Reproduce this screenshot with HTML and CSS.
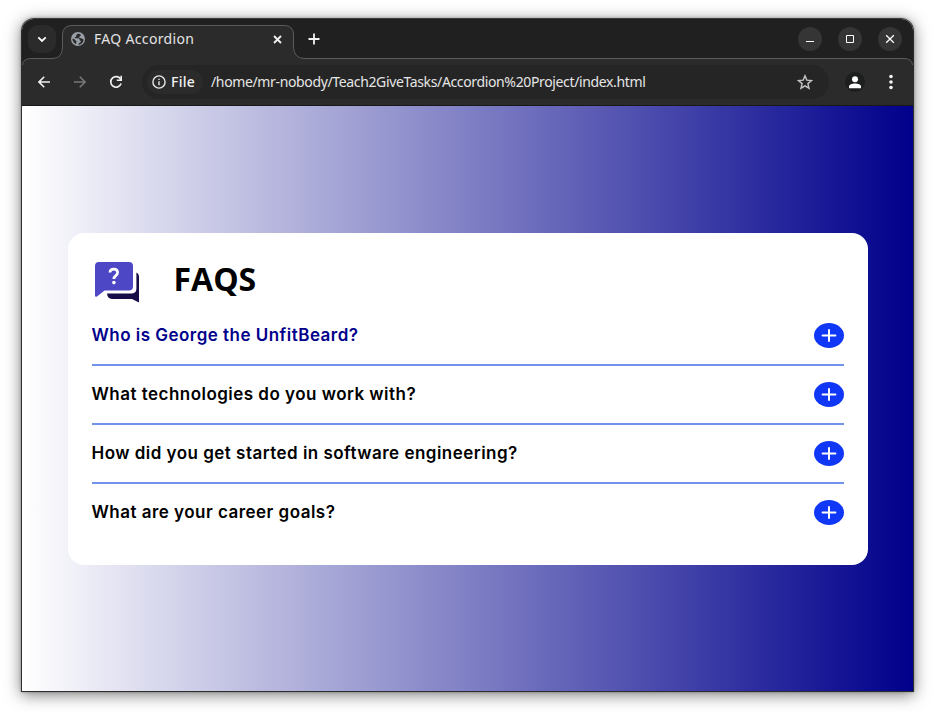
FILE: index.html
```html
<!DOCTYPE html>
<html lang="en">
<head>
<meta charset="utf-8">
<title>FAQ Accordion</title>
<link rel="stylesheet" href="styles.css">
</head>
<body>
<div class="window">
  <header class="chrome">
    <svg class="outline" width="891" height="87" viewBox="0 0 891 87" fill="none">
      <path fill="#2b2b2b" d="M0 87V46Q1 39.500 9 39.500H31Q40.500 39 40.500 28V15Q41 6.500 50 6.500H262Q271 6.500 271.500 15V28Q272 39 282 39.500H882Q890 39.500 891 46V87Z"/>
      <path stroke="#5b5b5b" d="M.5 46Q1 39.500 9 39.500H31Q40.500 39 40.500 28V15Q41 6.500 50 6.500H262Q271 6.500 271.500 15V28Q272 39 282 39.500H882Q890 39.500 890.500 46"/>
    </svg>
    <div class="tabs">
      <button class="search"><svg width="10" height="7" viewBox="0 0 10 7"><path d="M1.300 1.300 5 5 8.700 1.300" fill="none" stroke="#fff" stroke-width="1.800"/></svg></button>
      <div class="tab">
        <svg width="14" height="14" viewBox="0 0 14 14"><circle cx="7" cy="7" r="7" fill="#9aa0a8"/><path fill="#2b2b2b" d="M7.200 1.400C7 2.200 5.200 2.200 5.200 3.300c0 1 .2 1.700-.7 1.800-.9 0-1 .7-.4 1.200h3.200c1 0 1.300.8 1.300 1.500 0 .8 1.200.7 1.200 1.500 0 .6-.3 1.300-1.100 1.500-1 .2-.7 1.400-1.600 1.800.8.200 2.500-.1 3.600-1.200 1-.9 1.900-2.600 1.900-4-.7-.6-1.300-.8-2.100-.8-.6-.9-1.600-.8-2.300-.9-.3-.7.200-1.300.9-1.400.5-.1.400-1 .9-1.600-.9-.8-1.900-1.200-2.800-1.300ZM1.400 7c.1 1.900 1.300 4 3.200 4.900.5.200.8-.2.600-.7-.2-.8.500-1.200.4-1.800-.2-.8-1.500-.8-1.800-1.600C3.500 7.100 2.200 6.600 1.400 7Z"/></svg>
        <span class="tab-title">FAQ Accordion</span>
        <svg class="x" width="9" height="9" viewBox="0 0 9 9"><path d="m1 1 7 7M8 1 1 8" stroke="#f2f2f2" stroke-width="1.800"/></svg>
      </div>
      <svg class="new-tab" width="12" height="12" viewBox="0 0 12 12"><path d="M6 .5v11M.5 6h11" stroke="#f2f2f2" stroke-width="1.800"/></svg>
      <div class="controls">
        <button><svg width="24" height="24" viewBox="0 0 24 24"><path d="M8 14.500h8" stroke="#fff"/></svg></button>
        <button><svg width="24" height="24" viewBox="0 0 24 24"><path d="M8.500 8.500h7v7h-7Z" fill="none" stroke="#fff"/></svg></button>
        <button><svg width="24" height="24" viewBox="0 0 24 24"><path d="m8.200 8.200 7.600 7.600m0-7.600-7.600 7.600" stroke="#fff" stroke-width="1.300"/></svg></button>
      </div>
    </div>
    <div class="toolbar">
      <nav class="nav">
        <svg width="12" height="12" viewBox="0 0 12 12"><path d="M12 6H1.300M6.200.8 1 6l5.200 5.200" fill="none" stroke="#f0f0f0" stroke-width="1.600"/></svg>
        <svg width="12" height="12" viewBox="0 0 12 12"><path d="M0 6h10.700M5.800.8 11 6l-5.200 5.200" fill="none" stroke="#777" stroke-width="1.600"/></svg>
        <svg class="reload" width="14" height="14" viewBox="0 0 14 14"><path d="M11.800 4.500A5.300 5.300 0 1 0 12.100 8.600" fill="none" stroke="#f0f0f0" stroke-width="1.700"/><path d="M13 .8V6H7.800V4.400h3.600V.8Z" fill="#f0f0f0"/></svg>
      </nav>
      <div class="address">
        <div class="chip">
          <svg width="14" height="14" viewBox="0 0 14 14"><circle cx="7" cy="7" r="6.100" fill="none" stroke="#e8e8e8" stroke-width="1.400"/><path d="M7 6.300v4M7 3.700v1.400" stroke="#e8e8e8" stroke-width="1.400"/></svg>
          <span class="file">File</span>
        </div>
        <span class="url">/home/mr-nobody/Teach2GiveTasks/Accordion%20Project/index.html</span>
        <svg class="star" width="16" height="16" viewBox="0 0 16 16"><path d="m8 1.800 1.800 4.300 4.700.4-3.600 3.100 1.100 4.600L8 11.800l-4 2.400 1.100-4.600-3.600-3.100 4.700-.4Z" fill="none" stroke="#c4c4c4" stroke-width="1.400"/></svg>
      </div>
      <div class="avatar"><svg width="12" height="13" viewBox="0 0 12 13"><circle cx="6" cy="3.300" r="3" fill="#fff"/><path d="M0 12.200v-1.600C0 8.400 3 7.500 6 7.500s6 .9 6 3.100v1.600Z" fill="#fff"/></svg></div>
      <svg class="more" width="4" height="16" viewBox="0 0 4 16" fill="#f2f2f2"><circle cx="2" cy="2.500" r="1.800"/><circle cx="2" cy="8" r="1.800"/><circle cx="2" cy="13.500" r="1.800"/></svg>
    </div>
  </header>
  <main class="page">
    <section class="card">
      <div class="heading">
        <svg width="46" height="42" viewBox="0 0 46 42"><path fill="#150d48" d="M42.400 11.500q2.600 1.200 2.600 4V41.400L38 38H18q-4.500-.2-5-5.500h25q4.400-.3 4.400-5Z"/><path fill="#4d47c6" d="M5 1H35q4 0 4 4V25.500q0 4-4 4H10.500L3 35.500q-2 .8-2-1V5Q1 1 5 1Z"/><path d="M15.900 11.500c.2-4.700 7.700-4.500 7.700.1 0 3.300-3.700 2.800-3.700 6.400" fill="none" stroke="#fff" stroke-width="2.700"/><circle cx="19.900" cy="21.600" r="1.800" fill="#fff"/></svg>
        <h1>FAQS</h1>
      </div>
      <div class="item"><h2 class="active">Who is George the UnfitBeard?</h2><svg width="30" height="25" viewBox="0 0 30 25"><ellipse cx="15" cy="12.500" rx="15" ry="12.500" fill="#0f37f5"/><path d="M15 7v11M8.600 12.500h12.800" stroke="#fff" stroke-width="2" stroke-linecap="round"/></svg></div>
      <div class="item"><h2>What technologies do you work with?</h2><svg width="30" height="25" viewBox="0 0 30 25"><ellipse cx="15" cy="12.500" rx="15" ry="12.500" fill="#0f37f5"/><path d="M15 7v11M8.600 12.500h12.800" stroke="#fff" stroke-width="2" stroke-linecap="round"/></svg></div>
      <div class="item"><h2>How did you get started in software engineering?</h2><svg width="30" height="25" viewBox="0 0 30 25"><ellipse cx="15" cy="12.500" rx="15" ry="12.500" fill="#0f37f5"/><path d="M15 7v11M8.600 12.500h12.800" stroke="#fff" stroke-width="2" stroke-linecap="round"/></svg></div>
      <div class="item"><h2>What are your career goals?</h2><svg width="30" height="25" viewBox="0 0 30 25"><ellipse cx="15" cy="12.500" rx="15" ry="12.500" fill="#0f37f5"/><path d="M15 7v11M8.600 12.500h12.800" stroke="#fff" stroke-width="2" stroke-linecap="round"/></svg></div>
    </section>
  </main>
</div>
</body>
</html>
```

FILE: styles.css
```css
* { box-sizing: border-box; }
body { margin: 0; padding: 18px 21px 24px; height: 716px; overflow: hidden; background: #fff; font-family: "Open Sans", sans-serif; }
svg { display: block; flex: none; }
button { border: 0; padding: 0; display: flex; align-items: center; justify-content: center; }
.window { width: 893px; height: 674px; border: 1px solid #2d2d2d; border-top-color: #3a3d3c; border-radius: 13px 13px 0 0; overflow: hidden; box-shadow: 0 3px 16px rgba(0,0,0,.5), 0 0 3px rgba(0,0,0,.3); }
.chrome { position: relative; height: 87px; background: #202020; border-bottom: 1px solid #181818; overflow: hidden; }
.outline { position: absolute; left: 0; top: 0; }
.tabs { position: relative; display: flex; align-items: center; height: 40px; padding-left: 6px; }
.search { width: 28px; height: 28px; border-radius: 10px; background: #2b2b2b; }
.tab { display: flex; align-items: center; width: 231px; margin-left: 6px; padding: 0 11px 0 9px; }
.tab-title { color: #e3e3e3; font: 14px/20px "Noto Sans", sans-serif; letter-spacing: .33px; margin-left: 9px; white-space: nowrap; }
.x { margin-left: auto; }
.new-tab { margin-left: 15px; }
.controls { display: flex; gap: 16px; margin-left: auto; margin-right: 11px; }
.controls button { width: 24px; height: 24px; border-radius: 50%; background: #353535; }
.toolbar { position: relative; display: flex; align-items: center; height: 46px; padding-left: 16px; }
.nav { display: flex; align-items: center; gap: 24px; width: 104px; }
.reload { margin-left: -1px; }
.address { display: flex; align-items: center; width: 687px; height: 34px; padding: 0 16px 0 5px; border-radius: 17px; background: #252525; }
.chip { display: flex; align-items: center; width: 56px; height: 24px; padding-left: 5px; border-radius: 12px; background: #2b2b2b; }
.file { color: #f2f2f2; font: 500 14px/20px "Noto Sans", sans-serif; letter-spacing: .3px; margin-left: 5px; }
.url { color: #e6e6e6; font: 14px/20px "Noto Sans", sans-serif; letter-spacing: -.36px; margin-left: 8px; white-space: nowrap; }
.star { margin-left: auto; }
.avatar { display: flex; align-items: center; justify-content: center; width: 20px; height: 20px; margin-left: 16px; border-radius: 50%; background: #1d1f1e; }
.more { margin-left: 24px; }
.page { height: 585px; display: flex; align-items: center; justify-content: center; background: linear-gradient(to right, #fff, #00008b); }
.card { width: 800px; height: 332px; padding: 24px; border-radius: 16px; background: #fff; }
.heading { display: flex; align-items: center; height: 50px; gap: 34px; padding-left: 2px; }
.heading h1 { margin: 0 0 6px; font-size: 32px; line-height: 44px; font-weight: 700; color: #000; }
.item { display: flex; align-items: center; justify-content: space-between; height: 59px; border-bottom: 2px solid #7094eb; }
.item:last-child { border: 0; height: 57px; }
h2 { margin: 0; font: 600 17px/24px Inter, sans-serif; letter-spacing: .475px; color: #000; white-space: nowrap; }
.active { color: #00008b; }
```
